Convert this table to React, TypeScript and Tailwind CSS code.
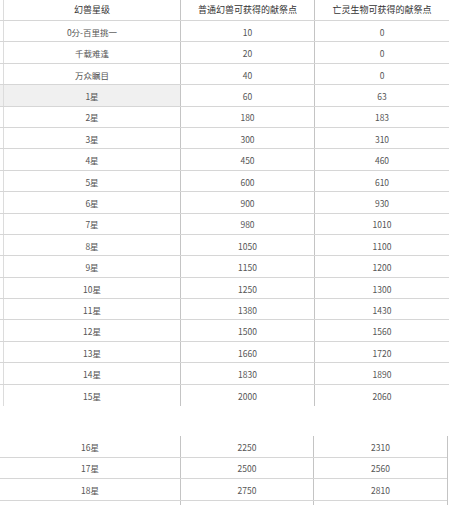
const rows1: [string, string, string][] = [
  ["0分-百里挑一", "10", "0"],
  ["千载难逢", "20", "0"],
  ["万众瞩目", "40", "0"],
  ["1星", "60", "63"],
  ["2星", "180", "183"],
  ["3星", "300", "310"],
  ["4星", "450", "460"],
  ["5星", "600", "610"],
  ["6星", "900", "930"],
  ["7星", "980", "1010"],
  ["8星", "1050", "1100"],
  ["9星", "1150", "1200"],
  ["10星", "1250", "1300"],
  ["11星", "1380", "1430"],
  ["12星", "1500", "1560"],
  ["13星", "1660", "1720"],
  ["14星", "1830", "1890"],
  ["15星", "2000", "2060"],
]

const rows2: [string, string, string][] = [
  ["16星", "2250", "2310"],
  ["17星", "2500", "2560"],
  ["18星", "2750", "2810"],
]

const font = { fontFamily: '"Noto Sans CJK SC", "Liberation Sans", sans-serif' }

export default function App() {
  return (
    <div className="w-[449px] h-[505px] overflow-hidden bg-white text-[8.5px] text-[#555]" style={font}>
      {/* first table */}
      <div className="flex flex-col">
        <div className="flex h-[21px] border-b border-[#d6d6d6] text-[#333] text-[9px]">
          <div className="w-[3px]" />
          <div className="w-[177px] flex items-center justify-center border-l border-[#dcdcdc]">幻兽星级</div>
          <div className="w-[134px] flex items-center justify-center border-l border-[#c4c4c4]">普通幻兽可获得的献祭点</div>
          <div className="flex-1 flex items-center justify-center border-l border-[#c4c4c4]">亡灵生物可获得的献祭点</div>
        </div>
        {rows1.map(([a, b, c], i) => (
          <div
            key={a}
            className={`flex h-[21.4px] ${i === rows1.length - 1 ? "" : "border-b border-[#d6d6d6]"}`}
          >
            <div className={`flex w-[180px] ${a === "1星" ? "bg-[#f0f0f0]" : ""}`}>
              <div className="w-[3px]" />
              <div className="flex-1 flex items-center justify-center border-l border-[#dcdcdc] pt-[2px]">{a}</div>
            </div>
            <div className="w-[134px] flex items-center justify-center border-l border-[#c4c4c4] pt-[2px]">{b}</div>
            <div className="flex-1 flex items-center justify-center border-l border-[#c4c4c4] pt-[2px]">{c}</div>
          </div>
        ))}
      </div>

      {/* second table */}
      <div className="mt-[30px] w-[448px] flex flex-col border-r border-[#c4c4c4]">
        {rows2.map(([a, b, c]) => (
          <div key={a} className="flex h-[21.5px] border-b border-[#d6d6d6]">
            <div className="w-[180px] flex items-center justify-center pt-[2px]">{a}</div>
            <div className="w-[133px] flex items-center justify-center border-l border-[#c4c4c4] pt-[2px]">{b}</div>
            <div className="flex-1 flex items-center justify-center border-l border-[#c4c4c4] pt-[2px]">{c}</div>
          </div>
        ))}
        <div className="flex h-[21px]">
          <div className="w-[180px]" />
          <div className="w-[133px] border-l border-[#c4c4c4]" />
          <div className="flex-1 border-l border-[#c4c4c4]" />
        </div>
      </div>
    </div>
  )
}
